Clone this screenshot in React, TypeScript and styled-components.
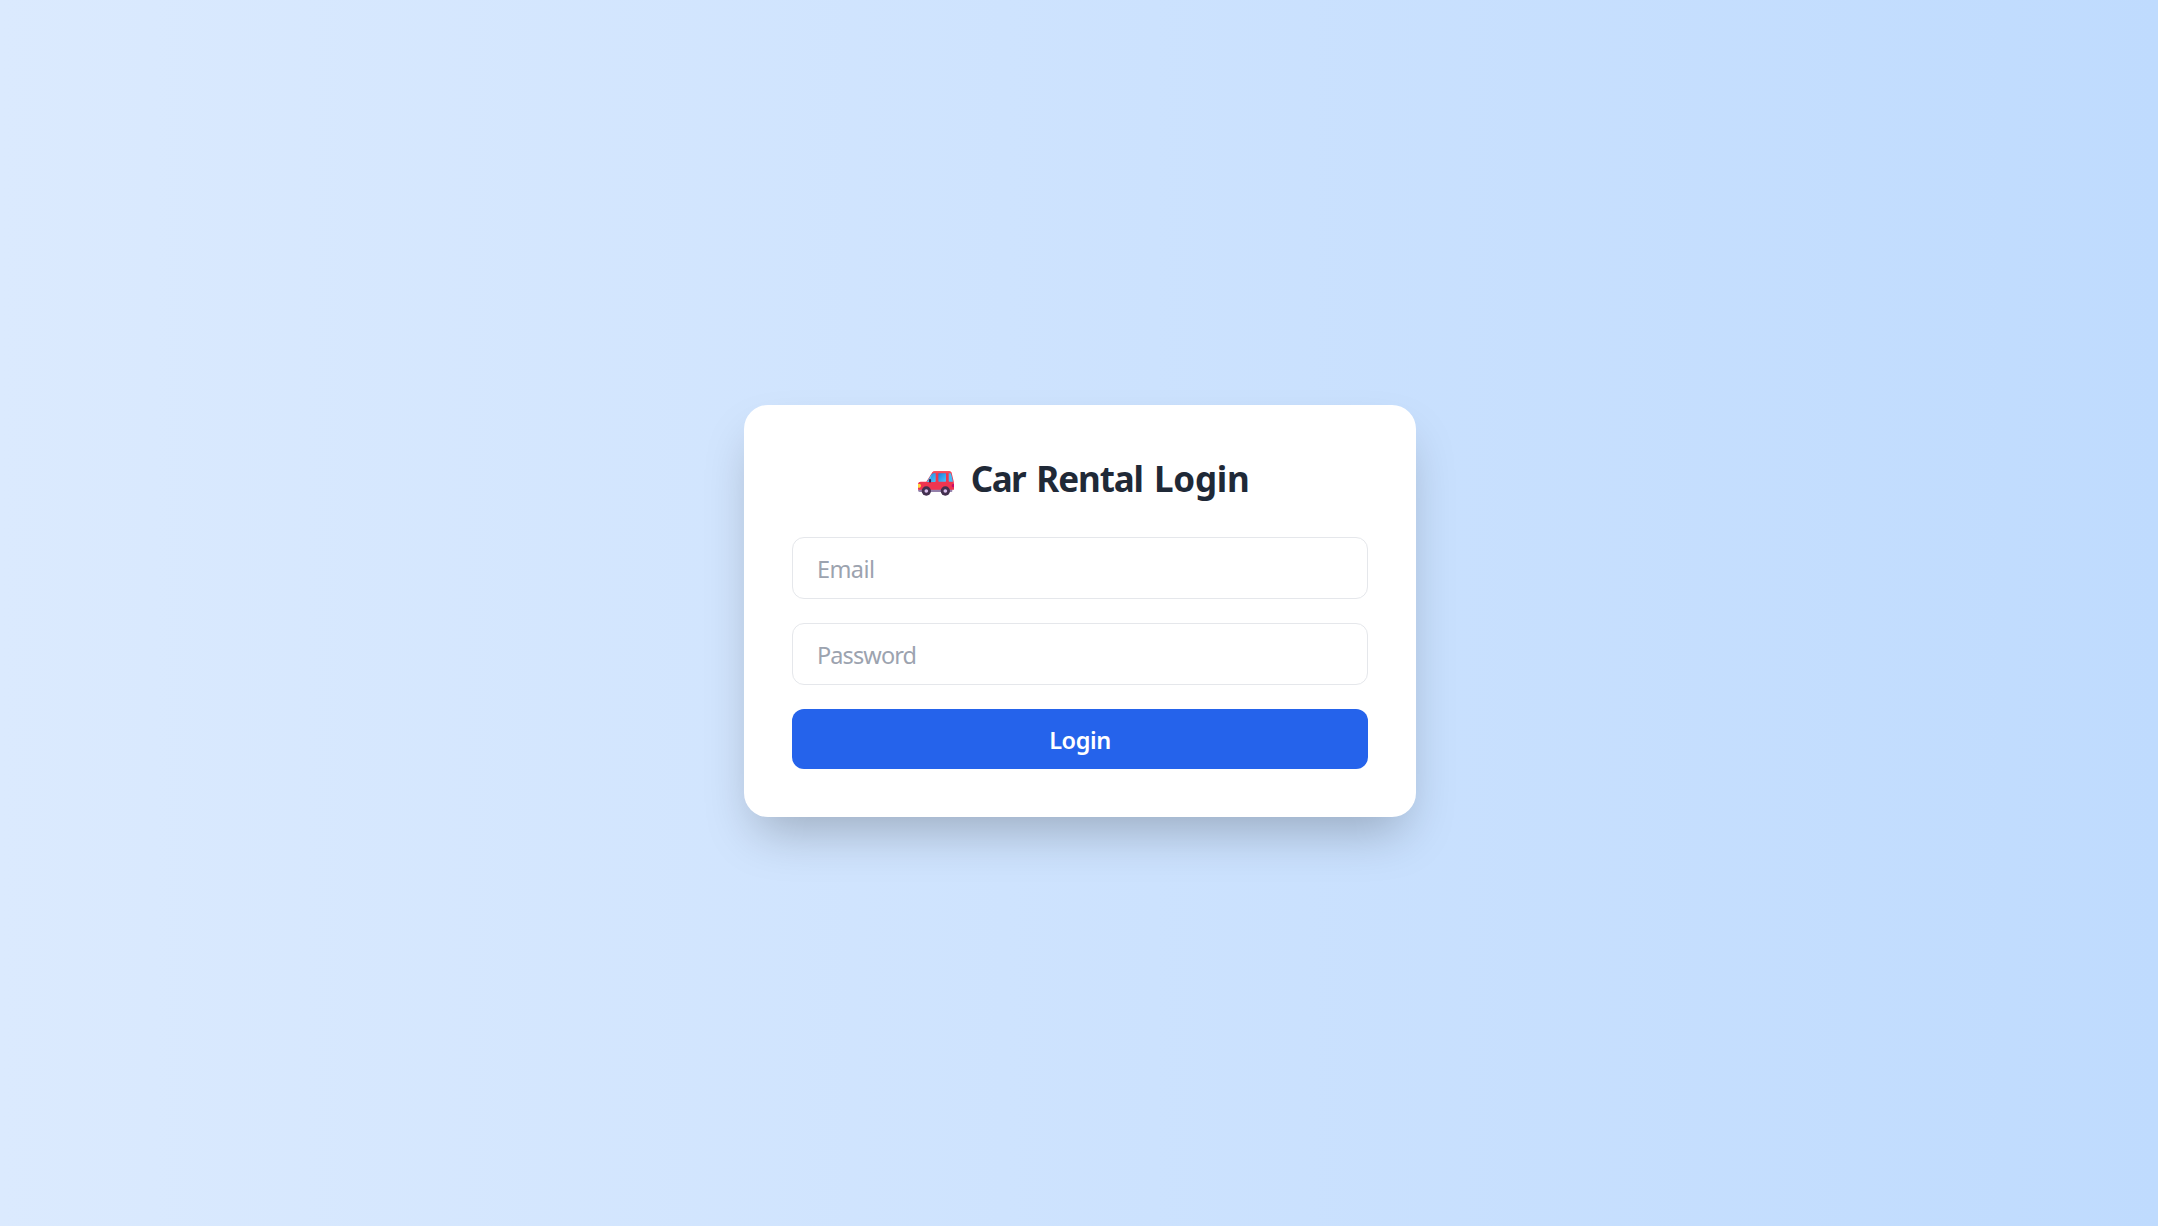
import React from "react";
import styled, { createGlobalStyle } from "styled-components";

const fontStack = `"Noto Sans", "Open Sans", sans-serif`;

const GlobalStyle = createGlobalStyle`
  *, *::before, *::after { box-sizing: border-box; }
  body { margin: 0; font-family: ${fontStack}; }
`;

const Page = styled.main`
  min-height: 100vh;
  display: flex;
  align-items: center;
  justify-content: center;
  padding: 0 0 4px 2px;
  background: linear-gradient(to right, #dbeafe, #bfdbfe);
`;

const Card = styled.section`
  width: 672px;
  padding: 48px;
  border-radius: 24px;
  background: #fff;
  box-shadow: 0 25px 50px -12px rgba(0, 0, 0, 0.25);
`;

const Title = styled.h1`
  display: flex;
  align-items: flex-start;
  justify-content: center;
  gap: 17px;
  margin: 0 0 34px;
  padding: 2px 0 0 7px;
  font-size: 35px;
  line-height: 48px;
  font-weight: 700;
  color: #1f2937;
`;

const TitleText = styled.span`
  word-spacing: 2px;
  white-space: nowrap;
`;

const Word = styled.span<{ $spacing: number }>`
  letter-spacing: ${(p) => p.$spacing}px;
`;

const CarIcon = styled.svg`
  width: 36px;
  height: 25px;
  margin-top: 16px;
  flex: none;
`;

const Form = styled.form`
  display: flex;
  flex-direction: column;
  gap: 24px;
`;

const Field = styled.input<{ $spacing: number }>`
  width: 100%;
  height: 62px;
  padding: 13px 24px 11px;
  border: 1px solid #e5e7eb;
  border-radius: 12px;
  background: #fff;
  font: 400 23.5px/36px ${fontStack};
  letter-spacing: ${(p) => p.$spacing}px;
  color: #1f2937;
  outline: none;
  &::placeholder { color: #9ca3af; opacity: 1; }
`;

const LoginButton = styled.button`
  height: 60px;
  padding: 13px 12px 11px;
  border: 0;
  border-radius: 12px;
  background: #2563eb;
  color: #fff;
  font: 600 23.5px/36px ${fontStack};
  letter-spacing: -0.4px;
  cursor: pointer;
`;

const Car = () => (
  <CarIcon viewBox="0 0 108 75" aria-hidden="true">
    <defs>
      <linearGradient id="glass" x1="0" y1="0" x2="1" y2="1">
        <stop offset="0" stopColor="#1d7fdc" />
        <stop offset="1" stopColor="#4cc3fb" />
      </linearGradient>
    </defs>
    <path d="M5 52h98v8q0 3-3 3H5q-5 0-5-5z" fill="#9480ab" />
    <path d="M0 38q1-6 8-6h17L42 5q3-4 9-4h42q6 0 8 5l6 25 1 8v17H0z" fill="#ef3550" />
    <path d="M44 3q3-2 7-2h42q5 0 7 3l1 3H42z" fill="#fb4a55" />
    <path d="M27 33L41 10q2-3 6-3h6v23q0 3-3 3z" fill="url(#glass)" />
    <path d="M27 33L41 10l-5 23z" fill="#54c6f6" />
    <rect x="61" y="7" width="23" height="25" rx="2" fill="url(#glass)" />
    <path d="M92 7h5q2 0 3 4l5 21H94q-2 0-2-3z" fill="#48bdf5" />
    <ellipse cx="36" cy="29" rx="3.5" ry="6" fill="#38244f" />
    <path d="M0 39h5q4 0 4 5t-4 6H0z" fill="#ffd43b" />
    <path d="M108 39h-3q-4 0-4 5t4 5h3z" fill="#c80a69" />
    <circle cx="25" cy="60" r="14" fill="#43304f" />
    <circle cx="25" cy="60" r="5.5" fill="#d9c1ed" />
    <circle cx="82" cy="60" r="14" fill="#43304f" />
    <circle cx="82" cy="60" r="5.5" fill="#d9c1ed" />
  </CarIcon>
);

export default function App() {
  return (
    <>
      <GlobalStyle />
      <Page>
        <Card>
          <Title>
            <Car />
            <TitleText>
              <Word $spacing={-1.5}>Car</Word> <Word $spacing={-1.1}>Rental</Word>{" "}
              <Word $spacing={-0.3}>Login</Word>
            </TitleText>
          </Title>
          <Form onSubmit={(e) => e.preventDefault()}>
            <Field type="email" placeholder="Email" $spacing={-0.6} />
            <Field type="password" placeholder="Password" $spacing={-0.9} />
            <LoginButton type="submit">Login</LoginButton>
          </Form>
        </Card>
      </Page>
    </>
  );
}
